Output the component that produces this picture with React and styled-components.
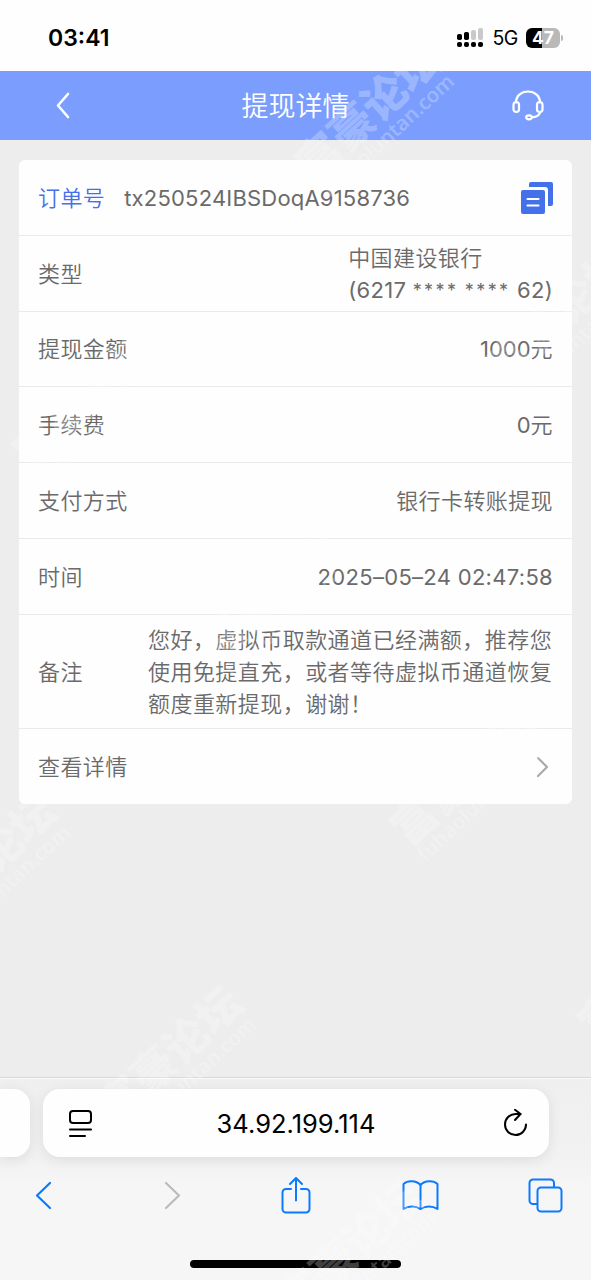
import styled, { createGlobalStyle } from 'styled-components';

const GlobalStyle = createGlobalStyle`
	* {
		box-sizing: border-box;
	}

	body {
		margin: 0;
		background: #ededed;
		font-family: Inter, 'Noto Sans CJK SC', sans-serif;
	}

	svg {
		display: block;
		flex-shrink: 0;
		fill: none;
		stroke-linecap: round;
		stroke-linejoin: round;
	}
`;

const Screen = styled.div`
	position: relative;
	display: flex;
	flex-direction: column;
	width: 591px;
	height: 1280px;
	overflow: hidden;
	background: #ededed;
`;

const StatusBar = styled.div`
	display: flex;
	align-items: center;
	height: 71px;
	padding: 4px 29px 0 48px;
	background: #fefefe;
	color: #000;
`;

const Clock = styled.div`
	margin-right: auto;
	font-size: 23px;
	font-weight: 600;
	line-height: 28px;
`;

const Network = styled.div`
	margin: 0 8px 0 8px;
	font-size: 19.5px;
	line-height: 24px;
	letter-spacing: -0.4px;
`;

const Battery = styled.div`
	display: flex;
	align-items: center;
	justify-content: center;
	width: 34px;
	height: 20px;
	border-radius: 6px;
	background: linear-gradient(90deg, #000 47%, #b9b9b9 47%);
	color: #fff;
	font-size: 17.5px;
	font-weight: 700;
	line-height: 20px;
`;

const BatteryTip = styled.div`
	width: 2px;
	height: 6px;
	margin: 0 -1px 0 1px;
	border-radius: 0 2px 2px 0;
	background: #b9b9b9;
`;

const Header = styled.header`
	display: grid;
	grid-template-columns: 126px 1fr 126px;
	align-items: center;
	justify-items: center;
	height: 69px;
	background: #7b9efe;
	color: #fff;
`;

const Title = styled.h1`
	margin: 0;
	padding-top: 3px;
	font-size: 27px;
	font-weight: 350;
	line-height: 36px;
`;

const Content = styled.main`
	flex: 1;
	padding: 20px 19px 0;
`;

const Card = styled.section`
	height: 643.5px;
	border-radius: 6px;
	background: #fefefe;
	color: #6a6a6a;
	font-size: 22px;
	font-weight: 350;
	line-height: 32px;
	letter-spacing: 0.4px;
`;

const Row = styled.div`
	display: flex;
	align-items: center;
	height: ${props => (props.$tall ? 114 : 75.8)}px;
	padding: 1px 19px 0;
	border-bottom: 1px solid #eaeaea;

	&:last-child {
		border-bottom: none;
	}
`;

const Label = styled.div`
	flex-shrink: 0;
	color: ${props => (props.$accent ? '#4470ea' : 'inherit')};
`;

const Value = styled.div`
	margin-left: auto;
`;

const Figure = styled.span`
	font-weight: 400;
	letter-spacing: ${props => props.$spacing || 0}px;
`;

const Mask = styled.span`
	font-size: 18px;
	line-height: 0;
	letter-spacing: 2.4px;
	vertical-align: 1px;
`;

const OrderNumber = styled.div`
	margin: 0 auto 0 19px;
`;

const Remark = styled.div`
	width: 405px;
	margin-left: auto;
	letter-spacing: 0.45px;
	white-space: nowrap;
`;

const DetailArrow = styled.div`
	margin: 0 4px 0 auto;
`;

const Browser = styled.footer`
	height: 203px;
	border-top: 1px solid #d8d8d8;
	background: linear-gradient(#efefef, #f2f2f2 80px, #f6f6f6 110px);
	box-shadow: inset 0 1px 0 #fafafa;
`;

const Tabs = styled.div`
	display: flex;
	gap: 13px;
	padding-top: 11px;
`;

const TabEdge = styled.div`
	width: 30px;
	height: 68px;
	border-radius: 0 16px 16px 0;
	background: #fefefe;
	box-shadow: 0 3px 14px rgba(0, 0, 0, 0.09);
`;

const AddressBar = styled.div`
	display: flex;
	align-items: center;
	justify-content: space-between;
	width: 506px;
	height: 68px;
	padding: 0 21px 0 25px;
	border-radius: 17px;
	background: #fefefe;
	box-shadow: 0 3px 14px rgba(0, 0, 0, 0.09);
	color: #000;
	font-size: 25.5px;
`;

const Address = styled.span`
	padding-right: 4px;
`;

const Toolbar = styled.nav`
	display: grid;
	grid-template-columns: 125px 132px 116px 132px 118px;
	align-items: center;
	justify-items: center;
	height: 76px;
	margin-left: -19px;
	color: #0a7aff;
`;

const HomeIndicator = styled.div`
	width: 211px;
	height: 8px;
	margin: 27px auto 0;
	border-radius: 4px;
	background: #000;
`;

const Watermark = styled.div`
	position: absolute;
	left: ${props => props.$x - 176}px;
	top: ${props => props.$y - 60}px;
	width: 176px;
	color: rgba(255, 255, 255, 0.27);
	text-align: right;
	white-space: nowrap;
	transform: rotate(-42.5deg);
	transform-origin: 100% 100%;
	pointer-events: none;
`;

const WatermarkName = styled.div`
	font-size: 44px;
	font-weight: 900;
	line-height: 40px;
`;

const WatermarkSite = styled.div`
	padding-right: 4px;
	font-family: 'Open Sans', sans-serif;
	font-size: 20.5px;
	font-weight: 600;
	line-height: 20px;
`;

const marks = [
	[460, 82],
	[650, 285],
	[177, 370],
	[363, 562],
	[555, 746],
	[76, 833],
	[262, 1025],
	[442, 1219],
	[742, 942],
];

function Signal() {
	return (
		<svg width="27" height="19" viewBox="0 0 27 19">
			<g fill="#c9c9c9">
				<rect x="14" y="2" width="5" height="10" rx="2" />
				<rect x="21" y="0" width="5" height="12" rx="2" />
			</g>
			<g fill="#000">
				<rect x="0" y="6" width="5" height="6" rx="1.8" />
				<rect x="7" y="4" width="5" height="8" rx="1.8" />
				<rect x="0" y="14" width="5" height="5" rx="2" />
				<rect x="7" y="14" width="5" height="5" rx="2" />
				<rect x="14" y="14" width="5" height="5" rx="2" />
				<rect x="21" y="14" width="5" height="5" rx="2" />
			</g>
		</svg>
	);
}

function HeadsetIcon() {
	return (
		<svg width="32" height="31" viewBox="0 0 32 31" stroke="#fff" strokeWidth="2.2">
			<path d="M4 12.500C4 6 9 1.500 16 1.500S28 6 28 12.500" />
			<rect x="1.500" y="12" width="5.500" height="10" rx="2.700" />
			<rect x="25" y="12" width="5.500" height="10" rx="2.700" />
			<path d="M28 22c0 3-3 4.800-8 5.300" />
			<ellipse cx="17" cy="27.300" rx="2.800" ry="2" />
		</svg>
	);
}

function CopyIcon() {
	return (
		<svg width="32" height="32" viewBox="0 0 32 32">
			<path
				d="M10 0h20a2 2 0 0 1 2 2v20a2 2 0 0 1-2 2h-3V8a3 3 0 0 0-3-3H8V2a2 2 0 0 1 2-2z"
				fill="#4470ea"
			/>
			<rect x="0" y="8" width="24" height="24" rx="2" fill="#4470ea" />
			<path d="M6.5 17h11M6.5 23.5h11" stroke="#fff" strokeWidth="2.2" />
		</svg>
	);
}

function Chevron({ left, width, height, stroke, strokeWidth }) {
	const d = left
		? `M${width - 2} 2L2 ${height / 2}l${width - 4} ${height / 2 - 2}`
		: `M2 2l${width - 4} ${height / 2 - 2}L2 ${height - 2}`;

	return (
		<svg width={width} height={height} stroke={stroke} strokeWidth={strokeWidth}>
			<path d={d} />
		</svg>
	);
}

function PageIcon() {
	return (
		<svg width="24" height="28" viewBox="0 0 24 28" stroke="#000" strokeWidth="2">
			<rect x="2" y="2" width="21" height="12" rx="3" />
			<path d="M2 20.500h21M2 27h15" />
		</svg>
	);
}

function ReloadIcon() {
	return (
		<svg width="24" height="28" viewBox="0 0 24 28" stroke="#000" strokeWidth="2">
			<path d="M22 15.500A10.500 10.500 0 1 1 11.500 5h5" />
			<path d="M11 .8l5.500 4.200-5.500 6" />
		</svg>
	);
}

function ShareIcon() {
	return (
		<svg width="30" height="37" viewBox="0 0 30 37" stroke="currentColor" strokeWidth="2">
			<path d="M10 12H5a3.5 3.5 0 0 0-3.5 3.5v16.500A3.5 3.5 0 0 0 5 35.500h20a3.5 3.5 0 0 0 3.5-3.5v-16.500A3.5 3.5 0 0 0 25 12h-5" />
			<path d="M15 23.5V1.500M9 7l6-6 6 6" />
		</svg>
	);
}

function BookIcon() {
	return (
		<svg width="37" height="31" viewBox="0 0 37 31" stroke="currentColor" strokeWidth="2">
			<path d="M18.500 5C14 .3 5.500 .3 1.500 4v25c5-3.500 12-3.500 17 0 5-3.500 12-3.500 17 0V4C31.500 .3 23 .3 18.500 5z" />
			<path d="M18.500 5v24" />
		</svg>
	);
}

function TabsIcon() {
	return (
		<svg width="35" height="35" viewBox="0 0 35 35" stroke="currentColor" strokeWidth="2">
			<path d="M9 26H5a3.500 3.500 0 0 1-3.500-3.500V5A3.500 3.500 0 0 1 5 1.500h17.500A3.500 3.500 0 0 1 26 5v4" />
			<rect x="9.500" y="9.500" width="24" height="24" rx="3.500" />
		</svg>
	);
}

function App() {
	return (
		<>
			<GlobalStyle />
			<Screen>
				<StatusBar>
					<Clock>03:41</Clock>
					<Signal />
					<Network>5G</Network>
					<Battery>47</Battery>
					<BatteryTip />
				</StatusBar>
				<Header>
					<Chevron left width={14} height={27} stroke="#fff" strokeWidth={2.6} />
					<Title>提现详情</Title>
					<HeadsetIcon />
				</Header>
				<Content>
					<Card>
						<Row>
							<Label $accent>订单号</Label>
							<OrderNumber>
								<Figure $spacing={0.2}>tx250524IBSDoqA9158736</Figure>
							</OrderNumber>
							<CopyIcon />
						</Row>
						<Row>
							<Label>类型</Label>
							<Value>
								中国建设银行
								<br />
								<Figure $spacing={0.3}>
									(6217 <Mask>****</Mask> <Mask>****</Mask> 62)
								</Figure>
							</Value>
						</Row>
						<Row>
							<Label>提现金额</Label>
							<Value>
								<Figure>1000</Figure>元
							</Value>
						</Row>
						<Row>
							<Label>手续费</Label>
							<Value>
								<Figure>0</Figure>元
							</Value>
						</Row>
						<Row>
							<Label>支付方式</Label>
							<Value>银行卡转账提现</Value>
						</Row>
						<Row>
							<Label>时间</Label>
							<Value>
								<Figure $spacing={0.3}>2025–05–24 02:47:58</Figure>
							</Value>
						</Row>
						<Row $tall>
							<Label>备注</Label>
							<Remark>
								您好，虚拟币取款通道已经满额，推荐您
								<br />
								使用免提直充，或者等待虚拟币通道恢复
								<br />
								额度重新提现，谢谢！
							</Remark>
						</Row>
						<Row>
							<Label>查看详情</Label>
							<DetailArrow>
								<Chevron width={13} height={22} stroke="#aaa" strokeWidth={2.2} />
							</DetailArrow>
						</Row>
					</Card>
				</Content>
				<Browser>
					<Tabs>
						<TabEdge />
						<AddressBar>
							<PageIcon />
							<Address>34.92.199.114</Address>
							<ReloadIcon />
						</AddressBar>
					</Tabs>
					<Toolbar>
						<Chevron left width={17} height={29} stroke="#0a7aff" strokeWidth={2.2} />
						<Chevron width={17} height={29} stroke="#bbb" strokeWidth={2.2} />
						<ShareIcon />
						<BookIcon />
						<TabsIcon />
					</Toolbar>
					<HomeIndicator />
				</Browser>
				{marks.map(([x, y]) => (
					<Watermark key={`${x}-${y}`} $x={x} $y={y}>
						<WatermarkName>富豪论坛</WatermarkName>
						<WatermarkSite>fuhaoluntan.com</WatermarkSite>
					</Watermark>
				))}
			</Screen>
		</>
	);
}

export default App;
